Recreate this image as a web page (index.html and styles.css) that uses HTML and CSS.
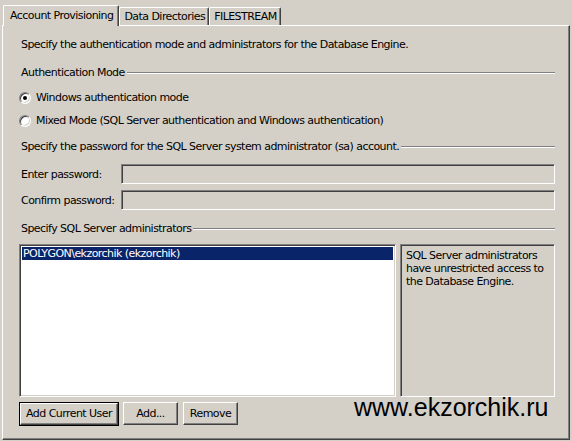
FILE: index.html
```html
<!DOCTYPE html>
<html lang="en">
 <head>
  <meta charset="utf-8">
  <title>Database Engine Configuration</title>
  <link rel="stylesheet" href="styles.css">
 </head>
 <body>
  <div class="tabs">
   <div class="tab active">Account Provisioning</div>
   <div class="tab">Data Directories</div>
   <div class="tab">FILESTREAM</div>
  </div>
  <div class="panel">
   <div class="intro">Specify the authentication mode and administrators for the Database Engine.</div>

   <div class="group g-auth">Authentication Mode</div>
   <div class="radiorow r1"><span class="radio checked"></span>Windows authentication mode</div>
   <div class="radiorow r2"><span class="radio"></span>Mixed Mode (SQL Server authentication and Windows authentication)</div>

   <div class="group g-pass">Specify the password for the SQL Server system administrator (sa) account.</div>
   <div class="field f1"><span class="label">Enter password:</span><span class="box"></span></div>
   <div class="field f2"><span class="label">Confirm password:</span><span class="box"></span></div>

   <div class="group g-admin">Specify SQL Server administrators</div>
   <div class="admins">
    <div class="list">
     <div class="item selected">POLYGON\ekzorchik (ekzorchik)</div>
    </div>
    <div class="info">SQL Server administrators have unrestricted access to the Database Engine.</div>
   </div>
   <div class="buttons">
    <span class="btn default">Add Current User</span>
    <span class="btn b-add">Add...</span>
    <span class="btn b-remove">Remove</span>
   </div>
  </div>
  <div class="watermark">www.ekzorchik.ru</div>
 </body>
</html>
```

FILE: styles.css
```css
html, body {
 margin: 0;
 padding: 0;
 width: 572px;
 height: 441px;
 overflow: hidden;
 background-color: #d4d0c8;
}

body {
 font-family: "DejaVu Sans", sans-serif;
 font-size: 11px;
 letter-spacing: -0.55px;
 color: #000;
 position: relative;
}

/* tabs */
.tabs {
 display: flex;
 align-items: flex-end;
 height: 25px;
 padding-left: 3px;
}

.tab {
 height: 17px;
 line-height: 17px;
 padding: 0 3px 0 4px;
 border-top: 1px solid #fff;
 border-left: 1px solid #fff;
 border-right: 1px solid #404040;
 box-shadow: inset -1px 0 #808080;
 border-radius: 2px 2px 0 0;
}

.tab.active {
 height: 20px;
 line-height: 20px;
 padding: 0 5px 0 6px;
 margin-bottom: -1px;
 position: relative;
 z-index: 1;
 background-color: #d4d0c8;
}

/* panel */
.panel {
 height: 413px;
 margin: 0 2px;
 padding: 0 14px 0 16px;
 border-top: 1px solid #fff;
 border-left: 1px solid #fff;
 border-right: 1px solid #404040;
 border-bottom: 1px solid #404040;
 box-shadow: inset -1px -1px #808080;
}

.intro {
 margin-top: 12px;
 line-height: 14px;
 padding-left: 2px;
}

.group {
 display: flex;
 align-items: center;
 line-height: 14px;
 padding-left: 2px;
}

.group::after {
 content: "";
 flex: 1;
 height: 0;
 border-top: 1px solid #808080;
 border-bottom: 1px solid #fff;
 margin-left: 2px;
}

.g-auth { margin-top: 14px; }
.g-pass { margin-top: 12px; }
.g-admin { margin-top: 12px; }

.radiorow {
 display: flex;
 align-items: center;
 line-height: 14px;
}

.r1 { margin-top: 11px; }
.r2 { margin-top: 9px; }

.radio {
 width: 10px;
 height: 10px;
 border-radius: 50%;
 border: 1px solid;
 border-color: #808080 #fff #fff #808080;
 box-shadow: inset 1px 1px #404040, inset -1px -1px #d4d0c8;
 background-color: #fff;
 margin-right: 5px;
 position: relative;
}

.radio.checked::after {
 content: "";
 position: absolute;
 left: 3px;
 top: 3px;
 width: 4px;
 height: 4px;
 border-radius: 50%;
 background-color: #000;
}

.field {
 display: flex;
 align-items: center;
 height: 20px;
}

.f1 { margin-top: 10px; }
.f2 { margin-top: 6px; }

.label {
 width: 100px;
 padding-left: 2px;
}

.box {
 flex: 1;
 height: 18px;
 border: 1px solid;
 border-color: #808080 #fff #fff #808080;
 box-shadow: inset 1px 1px #404040, inset -1px -1px #d4d0c8;
}

/* administrators */
.admins {
 display: flex;
 gap: 4px;
 margin-top: 8px;
 height: 153px;
}

.list {
 width: 371px;
 border: 1px solid;
 border-color: #808080 #fff #fff #808080;
 box-shadow: inset 1px 1px #404040, inset -1px -1px #d4d0c8;
 background-color: #fff;
 padding: 2px;
}

.item {
 line-height: 13px;
 padding-left: 1px;
}

.item.selected {
 background-color: #0a246a;
 color: #fff;
}

.info {
 flex: 1;
 border: 1px solid;
 border-color: #808080 #fff #fff #808080;
 box-shadow: inset 1px 1px #404040, inset -1px -1px #d4d0c8;
 padding: 4px 5px;
 line-height: 13px;
}

.buttons {
 display: flex;
 gap: 5px;
 margin-top: 5px;
}

.btn {
 height: 21px;
 line-height: 21px;
 text-align: center;
 border: 1px solid;
 border-color: #fff #404040 #404040 #fff;
 box-shadow: inset -1px -1px #808080;
}

.btn.default {
 width: 96px;
 outline: 1px solid #000;
 margin-left: 1px;
 margin-top: 1px;
 height: 20px;
 line-height: 20px;
}

.b-add { width: 53px; }
.b-remove { width: 53px; }

.watermark {
 position: absolute;
 left: 354px;
 top: 393px;
 font-family: "Liberation Sans", Arial, sans-serif;
 font-size: 25px;
 letter-spacing: 0;
 line-height: 28px;
 color: #000;
}
```
